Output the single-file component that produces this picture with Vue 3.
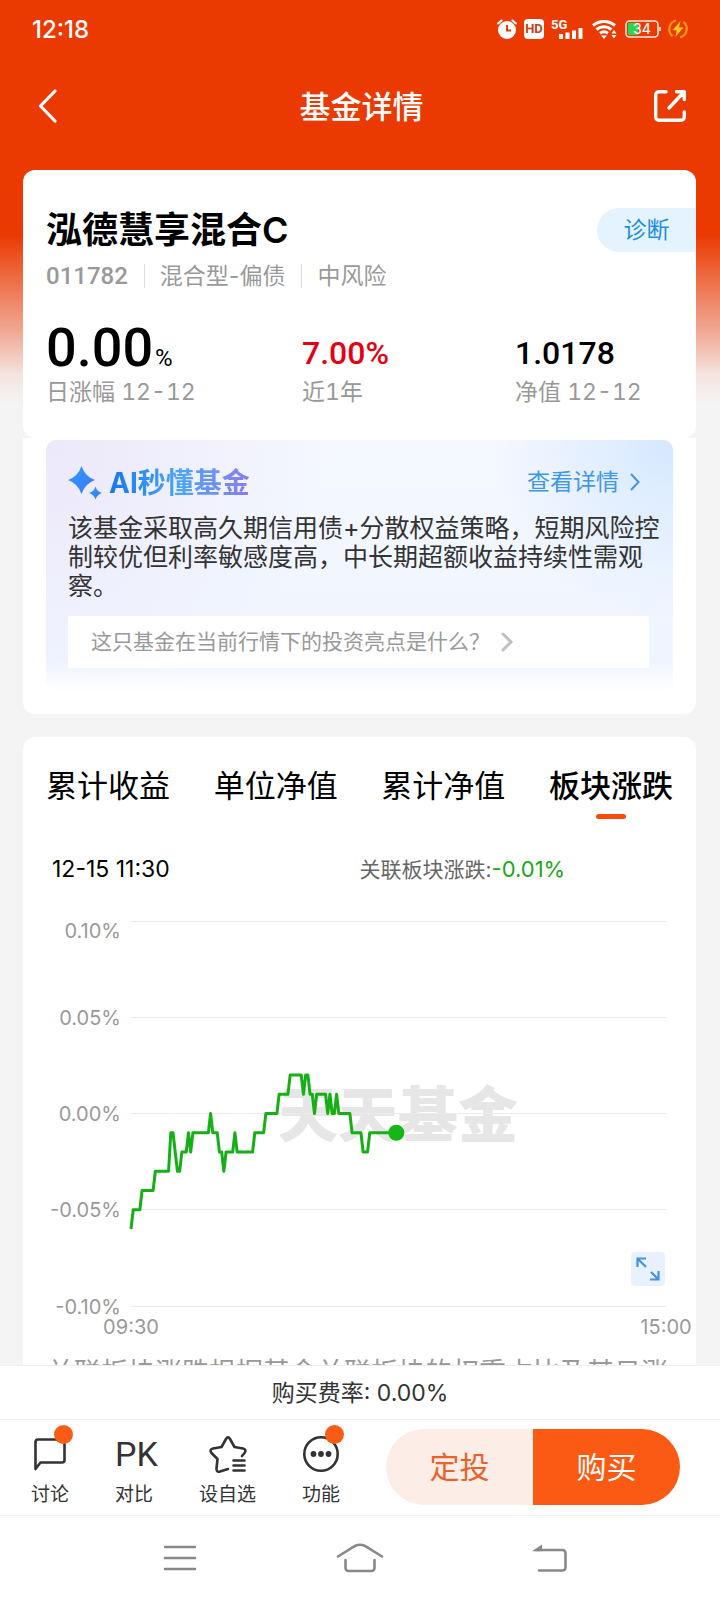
<template>
  <div class="page">
    <main class="content">
      <div class="status-bar">
        <span class="clock">12:18</span>
        <div class="status-icons">
          <svg width="20" height="20" viewBox="0 0 20 20">
            <circle cx="10" cy="11" r="9" fill="#fff" />
            <path d="M1 4.5 4.5 1.5M19 4.5 15.500 1.5" stroke="#fff" stroke-width="2" stroke-linecap="round" />
            <path d="M10 6v5.500h4" fill="none" stroke="#ea3a02" stroke-width="2" />
          </svg>
          <span class="hd">HD</span>
          <svg class="signal" width="32" height="20" viewBox="0 0 32 20">
            <text x="0" y="10" class="net">5G</text>
            <path d="M10 20v-5M16.500 20v-6.500M23 20v-8.500M29.500 20v-11" stroke="#fff" stroke-width="4" />
          </svg>
          <svg width="26" height="20" viewBox="0 0 26 20">
            <path d="M1 6.500a17 17 0 0 1 22 0M4.500 10.500a11.500 11.500 0 0 1 15 0M8 14.300a6.500 6.500 0 0 1 8 0" fill="none" stroke="#fff" stroke-width="3" />
            <path d="M9 16.500h6l-3 3.500zM19.500 14.500l2.500-3.500 2.500 3.500zM19.500 16l2.500 3.500 2.500-3.500z" fill="#fff" />
          </svg>
          <svg width="36" height="18" viewBox="0 0 36 18">
            <rect x="3" y="3" width="10" height="12" rx="1" fill="#2bd650" />
            <rect x="1" y="1" width="32" height="16" rx="3.500" fill="none" stroke="#ffe9e0" stroke-width="1.600" />
            <path d="M35 7v4" stroke="#ffe9e0" stroke-width="1.600" />
            <text x="17" y="14" text-anchor="middle" class="charge">34</text>
          </svg>
          <svg width="20" height="20" viewBox="0 0 20 20">
            <path d="M8 1.500a9 9 0 0 0-3.500 15.600M12 18.500a9 9 0 0 0 3.500-15.600" fill="none" stroke="#ff9416" stroke-width="2.200" />
            <path d="M12.500 2 4.500 11.300h4.200L7.300 18l8.200-9.500h-4.400z" fill="#ffc91a" />
          </svg>
        </div>
      </div>

      <header class="nav-bar">
        <button class="icon-btn" aria-label="返回">
          <svg width="32" height="34" viewBox="0 0 32 34">
            <path d="M18 2 3.500 17 18 32" fill="none" stroke="#fff" stroke-width="3.200" stroke-linecap="round" stroke-linejoin="round" />
          </svg>
        </button>
        <h1>基金详情</h1>
        <button class="icon-btn" aria-label="分享">
          <svg width="32" height="32" viewBox="0 0 32 32">
            <path d="M12 1.700H5A3.300 3.300 0 0 0 1.700 5v22A3.300 3.300 0 0 0 5 30.300h22a3.300 3.300 0 0 0 3.300-3.300v-5M22.500 1.700h7.800v7.800M29.500 2.500 15 18" fill="none" stroke="#fff" stroke-width="3.400" stroke-linecap="round" stroke-linejoin="round" />
          </svg>
        </button>
      </header>

      <section class="card fund">
        <div class="fund-top">
          <h2>泓德慧享混合C</h2>
          <button class="diagnose">诊断</button>
        </div>
        <p class="tags">
          <span class="code">011782</span>
          <span>混合型-偏债</span>
          <span>中风险</span>
        </p>
        <div class="metrics">
          <div v-for="m in metrics" :key="m.label" class="metric">
            <p class="value" :class="m.kind">{{ m.value }}<small v-if="m.unit">{{ m.unit }}</small></p>
            <p class="label">{{ m.label }}</p>
          </div>
        </div>
      </section>

      <section class="card ai">
        <div class="ai-panel">
          <div class="ai-head">
            <svg class="spark" width="34" height="34" viewBox="0 0 34 34">
              <defs>
                <linearGradient id="spark" x1="0" y1="0" x2="1" y2="1">
                  <stop offset="0" stop-color="#2f9bff" />
                  <stop offset="1" stop-color="#3d78f5" />
                </linearGradient>
              </defs>
              <path d="M13.500 0Q17 10.500 27 14 17 17.500 13.500 28 10 17.500 0 14 10 10.500 13.500 0z" fill="url(#spark)" />
              <path d="M27.500 20.500Q29 25.500 34 27 29 28.500 27.500 33.500 26 28.500 21 27 26 25.500 27.500 20.500z" fill="url(#spark)" />
            </svg>
            <h3>AI秒懂基金</h3>
            <a href="#" class="more">查看详情
              <svg width="12" height="20" viewBox="0 0 12 20">
                <path d="M2 2l7.500 8L2 18" fill="none" stroke="#3f97e6" stroke-width="2" />
              </svg>
            </a>
          </div>
          <p class="summary">该基金采取高久期信用债+分散权益策略，短期风险控制较优但利率敏感度高，中长期超额收益持续性需观察。</p>
          <a href="#" class="question">这只基金在当前行情下的投资亮点是什么？
            <svg width="14" height="20" viewBox="0 0 14 20">
              <path d="M2 2l8 8-8 8" fill="none" stroke="#bfbfbf" stroke-width="3" stroke-linecap="round" />
            </svg>
          </a>
        </div>
      </section>

      <section class="card trend">
        <nav class="tabs">
          <button v-for="t in tabs" :key="t" :class="{ active: t === activeTab }" @click="activeTab = t">{{ t }}</button>
        </nav>
        <div class="readout">
          <span class="time">12-15 11:30</span>
          <span class="sector">关联板块涨跌:<b>-0.01%</b></span>
        </div>
        <div class="chart">
          <svg viewBox="0 0 673 440" role="img" aria-label="板块涨跌走势">
            <text x="375" y="237" text-anchor="middle" class="watermark">天天基金</text>
            <g v-for="g in gridLines" :key="g.label">
              <line :x1="plotLeft" :x2="plotRight" :y1="g.y" :y2="g.y" stroke="#ebebeb" />
              <text x="98" :y="g.textY" text-anchor="end" class="axis">{{ g.label }}</text>
            </g>
            <text :x="plotLeft" y="434" text-anchor="middle" class="axis">09:30</text>
            <text :x="plotRight" y="434" text-anchor="middle" class="axis">15:00</text>
            <polyline :points="linePoints" fill="none" stroke="#16b016" stroke-width="3" stroke-linejoin="round" />
            <circle :cx="lastPoint.x" :cy="lastPoint.y" r="8" fill="#16b616" />
          </svg>
          <button class="expand" aria-label="全屏">
            <svg width="24" height="24" viewBox="0 0 24 24">
              <path d="M1.500 10V1.500H10M2 2l8 8M22.500 14v8.500H14M22 22l-7-7" fill="none" stroke="#4390e4" stroke-width="2.200" />
            </svg>
          </button>
        </div>
        <p class="note">关联板块涨跌根据基金关联板块的权重占比及其日涨跌幅加权计算</p>
      </section>
    </main>

    <footer>
      <p class="fee">购买费率: 0.00%</p>
      <div class="actions">
        <button class="tool">
          <span class="tool-icon">
            <svg width="36" height="36" viewBox="0 0 36 36">
              <path d="M3.500 33V6A2.500 2.500 0 0 1 6 3.500h24A2.500 2.500 0 0 1 32.500 6v18a2.500 2.500 0 0 1-2.500 2.500H8.500z" fill="none" stroke="#333" stroke-width="2.600" stroke-linejoin="round" />
            </svg>
            <i class="dot"></i>
          </span>
          讨论
        </button>
        <button class="tool">
          <span class="tool-icon pk">PK</span>
          对比
        </button>
        <button class="tool">
          <span class="tool-icon">
            <svg width="38" height="38" viewBox="0 0 38 38">
              <path d="M19 34 11 36.500Q7 37.500 7.500 33L8.500 24 2.500 18Q0 14.500 4 13.500L12.500 12 17 4Q19 .800 21 4L25.500 12 34 13.500Q38 14.500 35.500 18L33 21" fill="none" stroke="#333" stroke-width="2.600" stroke-linecap="round" stroke-linejoin="round" />
              <path d="M24.500 25.500h11M24.500 30.500h11M24.500 35.500h11" stroke="#333" stroke-width="2.600" stroke-linecap="round" />
            </svg>
          </span>
          设自选
        </button>
        <button class="tool">
          <span class="tool-icon">
            <svg width="36" height="36" viewBox="0 0 36 36">
              <circle cx="18" cy="18" r="16.700" fill="none" stroke="#333" stroke-width="2.600" />
              <circle cx="10.500" cy="18" r="2.900" fill="#333" />
              <circle cx="18" cy="18" r="2.900" fill="#333" />
              <circle cx="25.500" cy="18" r="2.900" fill="#333" />
            </svg>
            <i class="dot"></i>
          </span>
          功能
        </button>
        <div class="trade">
          <button class="invest">定投</button>
          <button class="buy">购买</button>
        </div>
      </div>
      <div class="system-nav">
        <button aria-label="最近任务">
          <svg width="34" height="28" viewBox="0 0 34 28">
            <path d="M2 3h30M2 14h30M2 25h30" stroke="#888" stroke-width="2.600" stroke-linecap="round" />
          </svg>
        </button>
        <button aria-label="主页">
          <svg width="48" height="32" viewBox="0 0 48 32">
            <path d="M2 14.500 19 4Q24 1.500 29 4L46 14.500M9.500 18v8a3 3 0 0 0 3 3h23a3 3 0 0 0 3-3v-8" fill="none" stroke="#888" stroke-width="2.600" stroke-linecap="round" />
          </svg>
        </button>
        <button aria-label="返回上一页">
          <svg width="56" height="30" viewBox="0 0 56 30">
            <path d="M24 7h26.500a3 3 0 0 1 3 3v14.500a3 3 0 0 1-3 3H27" fill="none" stroke="#888" stroke-width="2.600" stroke-linecap="round" />
            <path d="M20 8.300 30 1.500v6.800z" fill="#888" />
          </svg>
        </button>
      </div>
    </footer>
  </div>
</template>

<script setup>
import { computed, ref } from 'vue'

const metrics = [
  { value: '0.00', unit: '%', label: '日涨幅 12-12', kind: 'big' },
  { value: '7.00%', label: '近1年', kind: 'up' },
  { value: '1.0178', label: '净值 12-12', kind: '' }
]

const tabs = ['累计收益', '单位净值', '累计净值', '板块涨跌']
const activeTab = ref('板块涨跌')

const plotLeft = 108
const plotRight = 643
const plotTop = 21
const plotHeight = 385
const minutes = 242

const yOf = (hundredths) => plotTop + ((10 - hundredths) / 20) * plotHeight
const xOf = (minute) => plotLeft + (minute / minutes) * (plotRight - plotLeft)

const gridLines = [10, 5, 0, -5, -10].map((v) => {
  const y = Math.floor(yOf(v)) + 0.5
  return { y, textY: v === 10 ? y + 16 : y + 7, label: (v / 100).toFixed(2) + '%' }
})

// [minute since open, change in 0.01%]
const ticks = [
  [0, -6], [1, -5], [4, -5], [5, -4], [10, -4], [11, -3], [17, -3], [18, -1], [19, -1], [21, -3], [22, -3],
  [23, -2], [25, -2], [26, -1], [27, -2], [28, -1], [35, -1], [36, 0], [37, -1], [39, -1], [40, -2], [41, -2],
  [42, -3], [43, -2], [46, -2], [47, -1], [48, -2], [55, -2], [56, -1], [60, -1], [61, 0], [66, 0], [67, 1],
  [71, 1], [72, 2], [77, 2], [78, 1], [79, 2], [80, 2], [81, 1], [82, 1], [83, 0], [84, 1], [88, 1], [89, 0],
  [90, 1], [91, 0], [92, 0], [93, 1], [94, 0], [99, 0], [100, -1], [104, -1], [105, -2], [107, -2], [108, -1],
  [120, -1]
]

const linePoints = computed(() => ticks.map(([m, v]) => `${xOf(m)},${yOf(v)}`).join(' '))
const lastPoint = computed(() => {
  const [m, v] = ticks[ticks.length - 1]
  return { x: xOf(m), y: yOf(v) }
})
</script>

<style>
body { background: #f4f4f4; }
</style>

<style scoped>
.page { display: flex; flex-direction: column; height: 100vh; font-family: Inter, "Noto Sans CJK SC", sans-serif; color: #333; }
.page * { box-sizing: border-box; }
h1, h2, h3, p { margin: 0; font-weight: 400; }
button { border: none; background: none; padding: 0; font: inherit; color: inherit; cursor: pointer; }
a { text-decoration: none; }
svg { display: block; flex: none; overflow: visible; }

.content { flex: 1; min-height: 0; overflow: hidden; background: linear-gradient(#ea3a02 0, #ea3a02 235px, #f0a692 330px, #f4e4df 375px, #f4f4f4 405px); }

.status-bar { display: flex; justify-content: space-between; align-items: center; height: 58px; padding: 0 32px; color: #fff; }
.clock { font-size: 24px; font-weight: 500; }
.status-icons { display: flex; align-items: center; gap: 7px; }
.hd { width: 20px; height: 20px; border-radius: 4px; background: #fff; color: #c8401a; font: 700 13px/20px Roboto, sans-serif; text-align: center; }
.signal { margin-right: 2px; }
.net { font: 700 13px Roboto, sans-serif; fill: #fff; }
.charge { font: 500 14px Inter, sans-serif; fill: #fff; }

.nav-bar { display: flex; justify-content: space-between; align-items: center; height: 96px; margin-bottom: 16px; padding: 0 34px; color: #fff; }
.nav-bar h1 { padding-bottom: 4px; font-size: 31px; font-weight: 500; }
.nav-bar .icon-btn:first-child { padding-left: 3px; }

.card { margin: 0 24px 0 23px; background: #fff; border-radius: 12px; }
.fund { height: 268px; padding: 38px 0 0 23px; }
.fund-top { display: flex; justify-content: space-between; align-items: center; height: 44px; }
.fund-top h2 { padding-bottom: 6px; font-size: 36px; font-weight: 600; color: #000; }
.diagnose { width: 99px; height: 44px; padding-bottom: 4px; border-radius: 22px 0 0 22px; background: #e5f3ff; color: #1a8fe3; font-size: 23px; }
.tags { display: flex; align-items: center; margin-top: 12px; line-height: 24px; font-size: 23px; color: #999; }
.tags span + span { margin-left: 16px; padding-left: 15px; border-left: 1px solid #ddd; }
.code { font-family: Roboto, sans-serif; font-size: 24px; font-weight: 500; }
.metrics { display: grid; grid-template-columns: 256fr 213fr 181fr; margin-top: 34px; }
.value { height: 56px; font: 500 32px/62px Roboto, sans-serif; color: #000; white-space: nowrap; }
.value.big { font-size: 54px; line-height: 52px; }
.value.up { color: #e60012; }
.value small { margin-left: 2px; font-size: 24px; font-weight: 400; }
.label { line-height: 28px; font-size: 23px; font-variant-numeric: tabular-nums; color: #999; }

.ai { padding: 2px 23px 23px; border-radius: 0 0 12px 12px; }
.ai-panel { height: 251px; padding: 26px 0 0 22px; border-radius: 10px; background: linear-gradient(to top, #fff 0, #ffffff00 30px), radial-gradient(circle at 0 0, #ece8fa 0, #ece8fa00 280px), radial-gradient(circle at 100% 0, #d5e8ff 0, #d5e8ff00 180px), linear-gradient(#f5f8ff, #eef5ff); }
.ai-head { display: flex; align-items: center; height: 34px; }
.ai-head h3 { margin-left: 7px; font-size: 28px; line-height: 34px; font-weight: 700; color: transparent; background: linear-gradient(90deg, #1677f0, #4ba6fa 50%, #8b7cf0); background-clip: text; }
.more { display: flex; align-items: center; gap: 10px; margin-left: auto; margin-right: 32px; padding-bottom: 6px; font-size: 23px; color: #3f97e6; }
.more svg, .question svg { margin-top: 3px; }
.summary { margin: 14px 13px 0 0; font-size: 25px; line-height: 29px; color: #333; }
.question { display: flex; align-items: center; gap: 11px; height: 52px; margin: 15px 24px 0 0; padding: 0 0 4px 23px; background: #fff; font-size: 21px; color: #999; }

.trend { margin-top: 23px; }
.tabs { display: flex; justify-content: space-between; padding: 26px 23px 0; }
.tabs button { position: relative; height: 46px; font-size: 31px; line-height: 46px; color: #000; }
.tabs .active { font-weight: 500; }
.tabs .active::after { content: ""; position: absolute; left: 50%; top: 51px; width: 30px; height: 5px; margin-left: -15px; border-radius: 3px; background: #fa4a0c; }
.readout { display: flex; padding: 45px 29px 0; line-height: 30px; font-size: 21px; }
.time { flex: 0 0 50%; font-size: 23px; color: #000; }
.sector { color: #666; }
.sector b { font-size: 22px; font-weight: 400; color: #19a819; }
.chart { position: relative; margin-top: 15px; }
.chart > svg { width: 100%; }
.axis { font: 20px Inter, sans-serif; fill: #999; }
.watermark { font: 900 60px "Noto Sans CJK SC", sans-serif; fill: #e6e6e6; }
.expand { position: absolute; right: 31px; bottom: 54px; display: grid; place-items: center; width: 34px; height: 34px; border-radius: 4px; background: #e8f2ff; }
.note { padding: 15px 24px 30px; font-size: 27px; line-height: 36px; color: #999; }

footer { flex: none; background: #fff; border-top: 1px solid #eee; }
.fee { height: 54px; line-height: 54px; border-bottom: 1px solid #eee; text-align: center; font-size: 23px; }
.actions { display: flex; align-items: center; gap: 46px; height: 96px; padding: 0 40px 2px 31px; border-bottom: 1px solid #f2f2f2; }
.tool { display: flex; flex-direction: column; align-items: center; gap: 9px; padding-top: 9px; font-size: 19px; line-height: 26px; white-space: nowrap; }
.tool-icon { position: relative; display: grid; place-items: center; width: 38px; height: 38px; }
.pk { font: 34px/38px Roboto, sans-serif; }
.dot { position: absolute; top: -10px; right: -4px; width: 19px; height: 19px; border-radius: 50%; background: #fb5b14; }
.trade { flex: 1; display: flex; height: 76px; border-radius: 38px; overflow: hidden; font-size: 30px; }
.trade button { flex: 1; padding-bottom: 4px; }
.invest { background: #fcede6; color: #e8622a; }
.buy { background: #fb5a14; color: #fff; }
.system-nav { display: flex; height: 84px; padding: 0 90px; }
.system-nav button { flex: 1; display: grid; place-items: center; }
</style>
